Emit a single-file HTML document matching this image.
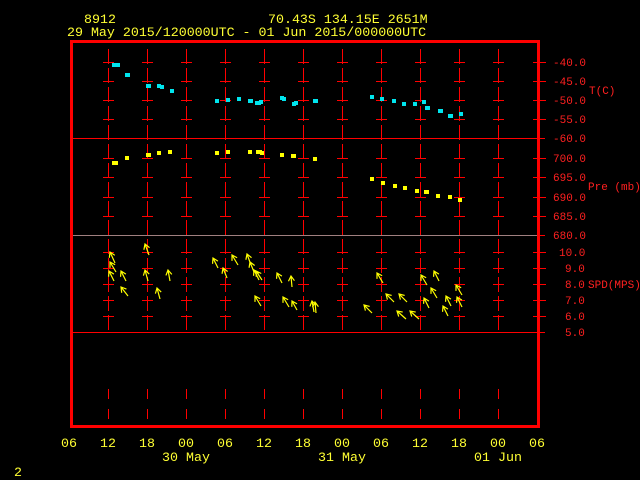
<!DOCTYPE html>
<html><head><style>
html,body{margin:0;padding:0;background:#000;width:640px;height:480px;overflow:hidden}
svg{display:block}
text{font-family:"Liberation Mono",monospace}
</style></head><body>
<svg width="640" height="480" xmlns="http://www.w3.org/2000/svg">
<g fill="#ffff33" font-size="13.3">
<text x="84" y="23">8912</text>
<text x="268" y="23">70.43S  134.15E  2651M</text>
<text x="67" y="36">29 May 2015/120000UTC - 01 Jun 2015/000000UTC</text>
</g>
<g id="grid" fill="#ff0000" shape-rendering="crispEdges"></g>
<g fill="none" stroke="#ff0000" stroke-width="3" shape-rendering="crispEdges"><rect x="71.5" y="41.5" width="467" height="385"/></g>
<g fill="#ff2020" font-size="11">
<text x="553" y="66">-40.0</text><text x="553" y="85">-45.0</text><text x="553" y="104">-50.0</text><text x="553" y="123">-55.0</text><text x="553" y="142">-60.0</text>
<text x="589" y="94">T(C)</text>
<text x="553" y="162">700.0</text><text x="553" y="181">695.0</text><text x="553" y="201">690.0</text><text x="553" y="220">685.0</text><text x="553" y="239">680.0</text>
<text x="588" y="190">Pre (mb)</text>
<text x="559" y="256">10.0</text><text x="565" y="272">9.0</text><text x="565" y="288">8.0</text><text x="565" y="304">7.0</text><text x="565" y="320">6.0</text><text x="565" y="336">5.0</text>
<text x="588" y="288">SPD(MPS)</text>
</g>
<g fill="#00e5ee">
<rect x="112" y="63" width="8" height="4"/><rect x="125" y="73" width="5" height="4"/>
<rect x="146" y="84" width="5" height="4"/><rect x="157" y="84" width="4" height="4"/><rect x="160" y="85" width="4" height="4"/>
<rect x="170" y="89" width="4" height="4"/><rect x="215" y="99" width="4" height="4"/><rect x="226" y="98" width="4" height="4"/>
<rect x="237" y="97" width="4" height="4"/><rect x="248" y="99" width="5" height="4"/><rect x="255" y="101" width="6" height="4"/><rect x="259" y="100" width="4" height="4"/>
<rect x="280" y="96" width="4" height="4"/><rect x="282" y="97" width="4" height="4"/><rect x="292" y="102" width="4" height="4"/><rect x="294" y="101" width="4" height="4"/>
<rect x="313" y="99" width="5" height="4"/><rect x="370" y="95" width="4" height="4"/><rect x="380" y="97" width="4" height="4"/>
<rect x="392" y="99" width="4" height="4"/><rect x="402" y="102" width="4" height="4"/><rect x="413" y="102" width="4" height="4"/>
<rect x="422" y="100" width="4" height="4"/><rect x="425" y="106" width="5" height="4"/><rect x="438" y="109" width="5" height="4"/>
<rect x="448" y="114" width="5" height="4"/><rect x="459" y="112" width="4" height="4"/>
</g>
<g fill="#ffff00">
<rect x="112" y="161" width="6" height="4"/><rect x="125" y="156" width="4" height="4"/><rect x="146" y="153" width="5" height="4"/>
<rect x="157" y="151" width="4" height="4"/><rect x="168" y="150" width="4" height="4"/><rect x="215" y="151" width="4" height="4"/>
<rect x="226" y="150" width="4" height="4"/><rect x="248" y="150" width="4" height="4"/><rect x="256" y="150" width="6" height="4"/>
<rect x="260" y="151" width="4" height="4"/><rect x="280" y="153" width="4" height="4"/><rect x="291" y="154" width="5" height="4"/>
<rect x="313" y="157" width="4" height="4"/><rect x="370" y="177" width="4" height="4"/><rect x="381" y="181" width="4" height="4"/>
<rect x="393" y="184" width="4" height="4"/><rect x="403" y="186" width="4" height="4"/><rect x="415" y="189" width="4" height="4"/>
<rect x="424" y="190" width="5" height="4"/><rect x="436" y="194" width="4" height="4"/><rect x="448" y="195" width="4" height="4"/>
<rect x="458" y="198" width="4" height="4"/>
</g>
<g id="arrows" stroke="#ffff00" stroke-width="1.2" fill="none"></g>
<g fill="#ffff33" font-size="13.3" text-anchor="middle">
<text x="69" y="447">06</text><text x="108" y="447">12</text><text x="147" y="447">18</text><text x="186" y="447">00</text>
<text x="225" y="447">06</text><text x="264" y="447">12</text><text x="303" y="447">18</text><text x="342" y="447">00</text>
<text x="381" y="447">06</text><text x="420" y="447">12</text><text x="459" y="447">18</text><text x="498" y="447">00</text>
<text x="537" y="447">06</text>
<text x="186" y="461">30 May</text><text x="342" y="461">31 May</text><text x="498" y="461">01 Jun</text>
<text x="18" y="476">2</text>
</g>
</svg>
<script>
var NS="http://www.w3.org/2000/svg";
var g=document.getElementById("grid");
function R(x,y,w,h,c){var r=document.createElementNS(NS,"rect");r.setAttribute("x",x);r.setAttribute("y",y);r.setAttribute("width",w);r.setAttribute("height",h);if(c)r.setAttribute("fill",c);g.appendChild(r);}
R(72,138,473,1);R(72,332,473,1);R(72,235,466,1,"#a08080");R(538,235,7,1);
var xs=[108,147,186,225,264,303,342,381,420,459,498];
xs.forEach(function(x){for(var y=49;y<330;y+=19){R(x,y,1,Math.min(15,330-y));}
R(x,389,1,10);R(x,409,1,10);});
var ys=[62,81,100,119,158,177,197,216,252,268,284,300,316];
xs.concat([538]).forEach(function(x){ys.forEach(function(y){R(x-5,y,x==538?13:11,1);});});
var a=document.getElementById("arrows");
var H=[[110,252,5,11],[110,262,6,10],[109,271,5,10],[121,271,5,10],[121,287,7,9],[145,244,4,11],[145,270,3,11],[157,288,3,11],[168,270,2,11],[213,258,5,10],[223,268,4,10],[232,255,6,10],[247,254,4,11],[250,262,4,10],[254,270,5,10],[256,271,6,9],[255,296,6,10],[277,273,5,10],[291,276,1,11],[283,297,6,10],[292,301,5,9],[312,301,2,11],[315,302,1,11],[364,305,8,8],[377,273,6,10],[386,294,8,8],[397,311,9,8],[399,294,8,8],[410,311,9,8],[421,275,6,10],[424,298,5,10],[431,288,6,10],[434,271,5,10],[443,306,5,10],[446,296,5,10],[456,285,6,10],[457,297,5,10]];
H.forEach(function(h){var x=h[0],y=h[1],dx=h[2],dy=h[3];var L=Math.sqrt(dx*dx+dy*dy),ux=dx/L,uy=dy/L;
var p=document.createElementNS(NS,"path");
var b1x=x+ux*5-uy*3,b1y=y+uy*5+ux*3,b2x=x+ux*5+uy*3,b2y=y+uy*5-ux*3;
p.setAttribute("d","M"+(x+dx)+" "+(y+dy)+"L"+x+" "+y+"M"+b1x+" "+b1y+"L"+x+" "+y+"L"+b2x+" "+b2y);a.appendChild(p);});
</script>
</body></html>
